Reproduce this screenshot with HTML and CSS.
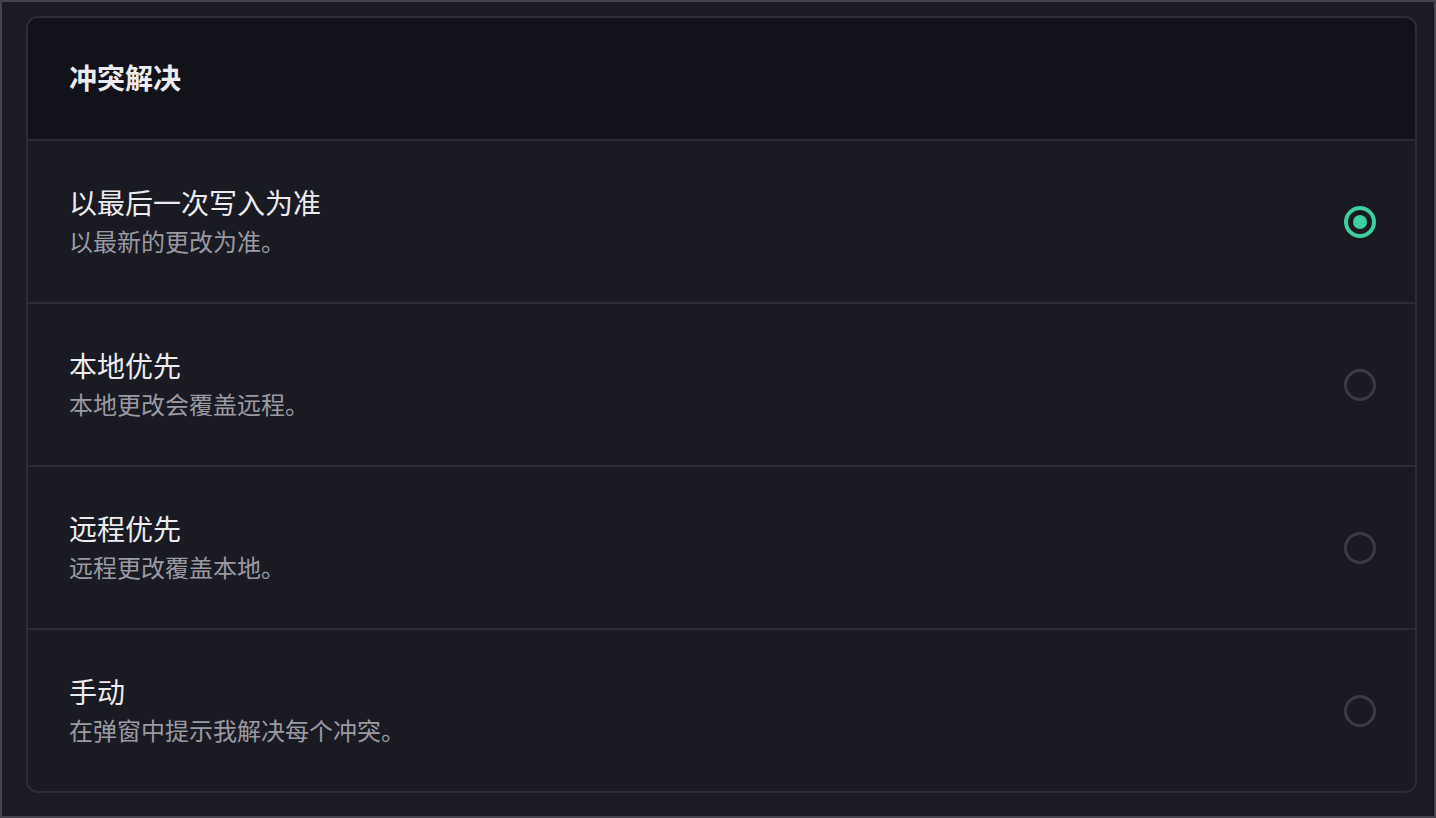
FILE: index.html
```html
<!DOCTYPE html>
<html lang="zh-CN">
<head>
<meta charset="utf-8">
<title>冲突解决</title>
<link rel="stylesheet" href="styles.css">
</head>
<body>
<div class="frame">
  <section class="card">
    <header class="card-head">
      <h2 class="card-title">冲突解决</h2>
    </header>
    <div class="option">
      <div class="option-text">
        <div class="option-title">以最后一次写入为准</div>
        <div class="option-desc">以最新的更改为准。</div>
      </div>
      <span class="radio radio-on"><span class="radio-dot"></span></span>
    </div>
    <div class="option">
      <div class="option-text">
        <div class="option-title">本地优先</div>
        <div class="option-desc">本地更改会覆盖远程。</div>
      </div>
      <span class="radio"></span>
    </div>
    <div class="option">
      <div class="option-text">
        <div class="option-title">远程优先</div>
        <div class="option-desc">远程更改覆盖本地。</div>
      </div>
      <span class="radio"></span>
    </div>
    <div class="option">
      <div class="option-text">
        <div class="option-title">手动</div>
        <div class="option-desc">在弹窗中提示我解决每个冲突。</div>
      </div>
      <span class="radio"></span>
    </div>
  </section>
</div>
</body>
</html>
```

FILE: styles.css
```css
* { box-sizing: border-box; }
html, body { margin: 0; padding: 0; }
body {
  width: 1436px;
  height: 818px;
  background: #1c1b24;
  font-family: "Noto Sans CJK SC", "Noto Sans", sans-serif;
  overflow: hidden;
}
.frame {
  width: 1436px;
  height: 818px;
  border: 2px solid #45434d;
  padding: 14px 17px 22px 24px;
}
.card {
  border: 2px solid #2c2c35;
  border-radius: 12px;
  overflow: hidden;
  background: #1a1a23;
}
.card-head {
  background: #12121b;
  height: 123px;
  padding: 0 40px 3px 41px;
  display: flex;
  align-items: center;
  border-bottom: 2px solid #2c2c35;
}
.card-title {
  margin: 0;
  font-size: 28px;
  line-height: 40px;
  font-weight: 700;
  color: #ececf0;
}
.option {
  display: flex;
  align-items: center;
  justify-content: space-between;
  height: 163px;
  padding: 0 39px 0 41px;
  border-bottom: 2px solid #2c2c35;
}
.option:last-child { border-bottom: none; height: 161px; }
.option-text { display: flex; flex-direction: column; }
.option-title {
  font-size: 28px;
  line-height: 36px;
  margin-bottom: 3px;
  color: #ececf0;
}
.option-desc {
  font-size: 24px;
  line-height: 36px;
  color: #9b9aa3;
}
.radio {
  width: 32px;
  height: 32px;
  border-radius: 50%;
  border: 3px solid #3b3b44;
  display: flex;
  align-items: center;
  justify-content: center;
  flex-shrink: 0;
}
.radio-on { border: 4px solid #3dcf9f; }
.radio-dot {
  width: 14px;
  height: 14px;
  border-radius: 50%;
  background: #3dcf9f;
}
```
